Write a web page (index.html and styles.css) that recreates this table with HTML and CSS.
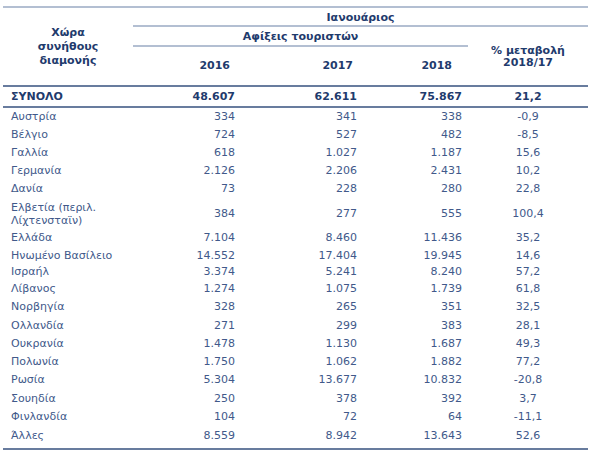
FILE: index.html
```html
<!DOCTYPE html>
<html lang="el">
<head>
<meta charset="utf-8">
<title>Αφίξεις τουριστών</title>
<link rel="stylesheet" href="styles.css">
</head>
<body>
<table class="stats">
  <colgroup>
    <col class="w0"><col class="w1"><col class="w2"><col class="w3"><col class="w4">
  </colgroup>
  <thead>
    <tr class="h1">
      <th class="country-h" rowspan="3">Χώρα<br>συνήθους<br>διαμονής</th>
      <th class="month" colspan="4">Ιανουάριος</th>
    </tr>
    <tr class="h2">
      <th class="arrivals" colspan="3">Αφίξεις τουριστών</th>
      <th class="change-h" rowspan="2">% μεταβολή<br>2018/17</th>
    </tr>
    <tr class="h3">
      <th class="year y1">2016</th>
      <th class="year y2">2017</th>
      <th class="year y3">2018</th>
    </tr>
  </thead>
  <tbody>
    <tr class="total"><td>ΣΥΝΟΛΟ</td><td>48.607</td><td>62.611</td><td>75.867</td><td>21,2</td></tr>
    <tr class="first"><td>Αυστρία</td><td>334</td><td>341</td><td>338</td><td>-0,9</td></tr>
    <tr><td>Βέλγιο</td><td>724</td><td>527</td><td>482</td><td>-8,5</td></tr>
    <tr><td>Γαλλία</td><td>618</td><td>1.027</td><td>1.187</td><td>15,6</td></tr>
    <tr><td>Γερμανία</td><td>2.126</td><td>2.206</td><td>2.431</td><td>10,2</td></tr>
    <tr><td>Δανία</td><td>73</td><td>228</td><td>280</td><td>22,8</td></tr>
    <tr class="two"><td>Ελβετία (περιλ.<br>Λίχτενσταϊν)</td><td>384</td><td>277</td><td>555</td><td>100,4</td></tr>
    <tr><td>Ελλάδα</td><td>7.104</td><td>8.460</td><td>11.436</td><td>35,2</td></tr>
    <tr class="r17"><td>Ηνωμένο Βασίλειο</td><td>14.552</td><td>17.404</td><td>19.945</td><td>14,6</td></tr>
    <tr class="r16"><td>Ισραήλ</td><td>3.374</td><td>5.241</td><td>8.240</td><td>57,2</td></tr>
    <tr><td>Λίβανος</td><td>1.274</td><td>1.075</td><td>1.739</td><td>61,8</td></tr>
    <tr><td>Νορβηγία</td><td>328</td><td>265</td><td>351</td><td>32,5</td></tr>
    <tr class="r19"><td>Ολλανδία</td><td>271</td><td>299</td><td>383</td><td>28,1</td></tr>
    <tr><td>Ουκρανία</td><td>1.478</td><td>1.130</td><td>1.687</td><td>49,3</td></tr>
    <tr><td>Πολωνία</td><td>1.750</td><td>1.062</td><td>1.882</td><td>77,2</td></tr>
    <tr><td>Ρωσία</td><td>5.304</td><td>13.677</td><td>10.832</td><td>-20,8</td></tr>
    <tr class="r19"><td>Σουηδία</td><td>250</td><td>378</td><td>392</td><td>3,7</td></tr>
    <tr><td>Φινλανδία</td><td>104</td><td>72</td><td>64</td><td>-11,1</td></tr>
    <tr class="last"><td>Άλλες</td><td>8.559</td><td>8.942</td><td>13.643</td><td>52,6</td></tr>
  </tbody>
</table>
</body>
</html>
```
FILE: styles.css
```css
html, body {
  margin: 0;
  padding: 0;
  background: #ffffff;
}

body {
  font-family: "DejaVu Sans", Verdana, sans-serif;
  font-size: 11px;
  color: #41598a;
}

.stats {
  margin: 6px 0 0 3px;
  width: 585px;
  table-layout: fixed;
  border-collapse: separate;
  border-spacing: 0;
  border-top: 2px solid #b3bfd2;
  border-bottom: 2px solid #687c9e;
}

.w0 { width: 130px; }
.w1 { width: 117px; }
.w2 { width: 115px; }
.w3 { width: 103px; }
.w4 { width: 120px; }

th {
  font-weight: bold;
  color: #1f3b6d;
  padding: 0;
  text-align: center;
  vertical-align: middle;
}

td {
  padding: 0;
  height: 18px;
  line-height: 18px;
  vertical-align: middle;
  white-space: nowrap;
}

.country-h {
  line-height: 14px;
  padding-top: 1px;
  border-bottom: 2px solid #687c9e;
}

.month {
  line-height: 14px;
  padding: 3px 0 0;
  height: 14px;
  border-bottom: 2px solid #b3bfd2;
}

.arrivals {
  line-height: 14px;
  padding: 3px 0 1px;
  height: 14px;
  border-bottom: 2px solid #b3bfd2;
}

.change-h {
  line-height: 12px;
  padding-top: 2px;
  border-bottom: 2px solid #687c9e;
}

.h3 th {
  height: 38px;
  line-height: 14px;
  border-bottom: 2px solid #687c9e;
}

.year { text-align: right; }
.y1 { padding-right: 20px; }
.y2 { padding-right: 12px; }
.y3 { padding-right: 16px; }

tbody td:nth-child(1) { text-align: left; padding-left: 8px; }
tbody td:nth-child(2) { text-align: right; padding-right: 15px; }
tbody td:nth-child(3) { text-align: right; padding-right: 8px; }
tbody td:nth-child(4) { text-align: right; padding-right: 6px; }
tbody td:nth-child(5) { text-align: center; }

.total td {
  font-weight: bold;
  color: #1f3b6d;
  height: 19px;
  line-height: 19px;
  border-bottom: 2px solid #687c9e;
}

.two td { height: 31px; }
.two td:first-child {
  line-height: 13px;
  padding-top: 3px;
  padding-bottom: 2px;
  height: 26px;
  white-space: normal;
}

.r17 td { height: 17px; line-height: 17px; }
.r16 td { height: 16px; line-height: 16px; }
.r19 td { height: 19px; line-height: 19px; }
.last td { height: 20px; line-height: 18px; padding-bottom: 2px; }
.last td:first-child { padding-bottom: 2px; }
```
